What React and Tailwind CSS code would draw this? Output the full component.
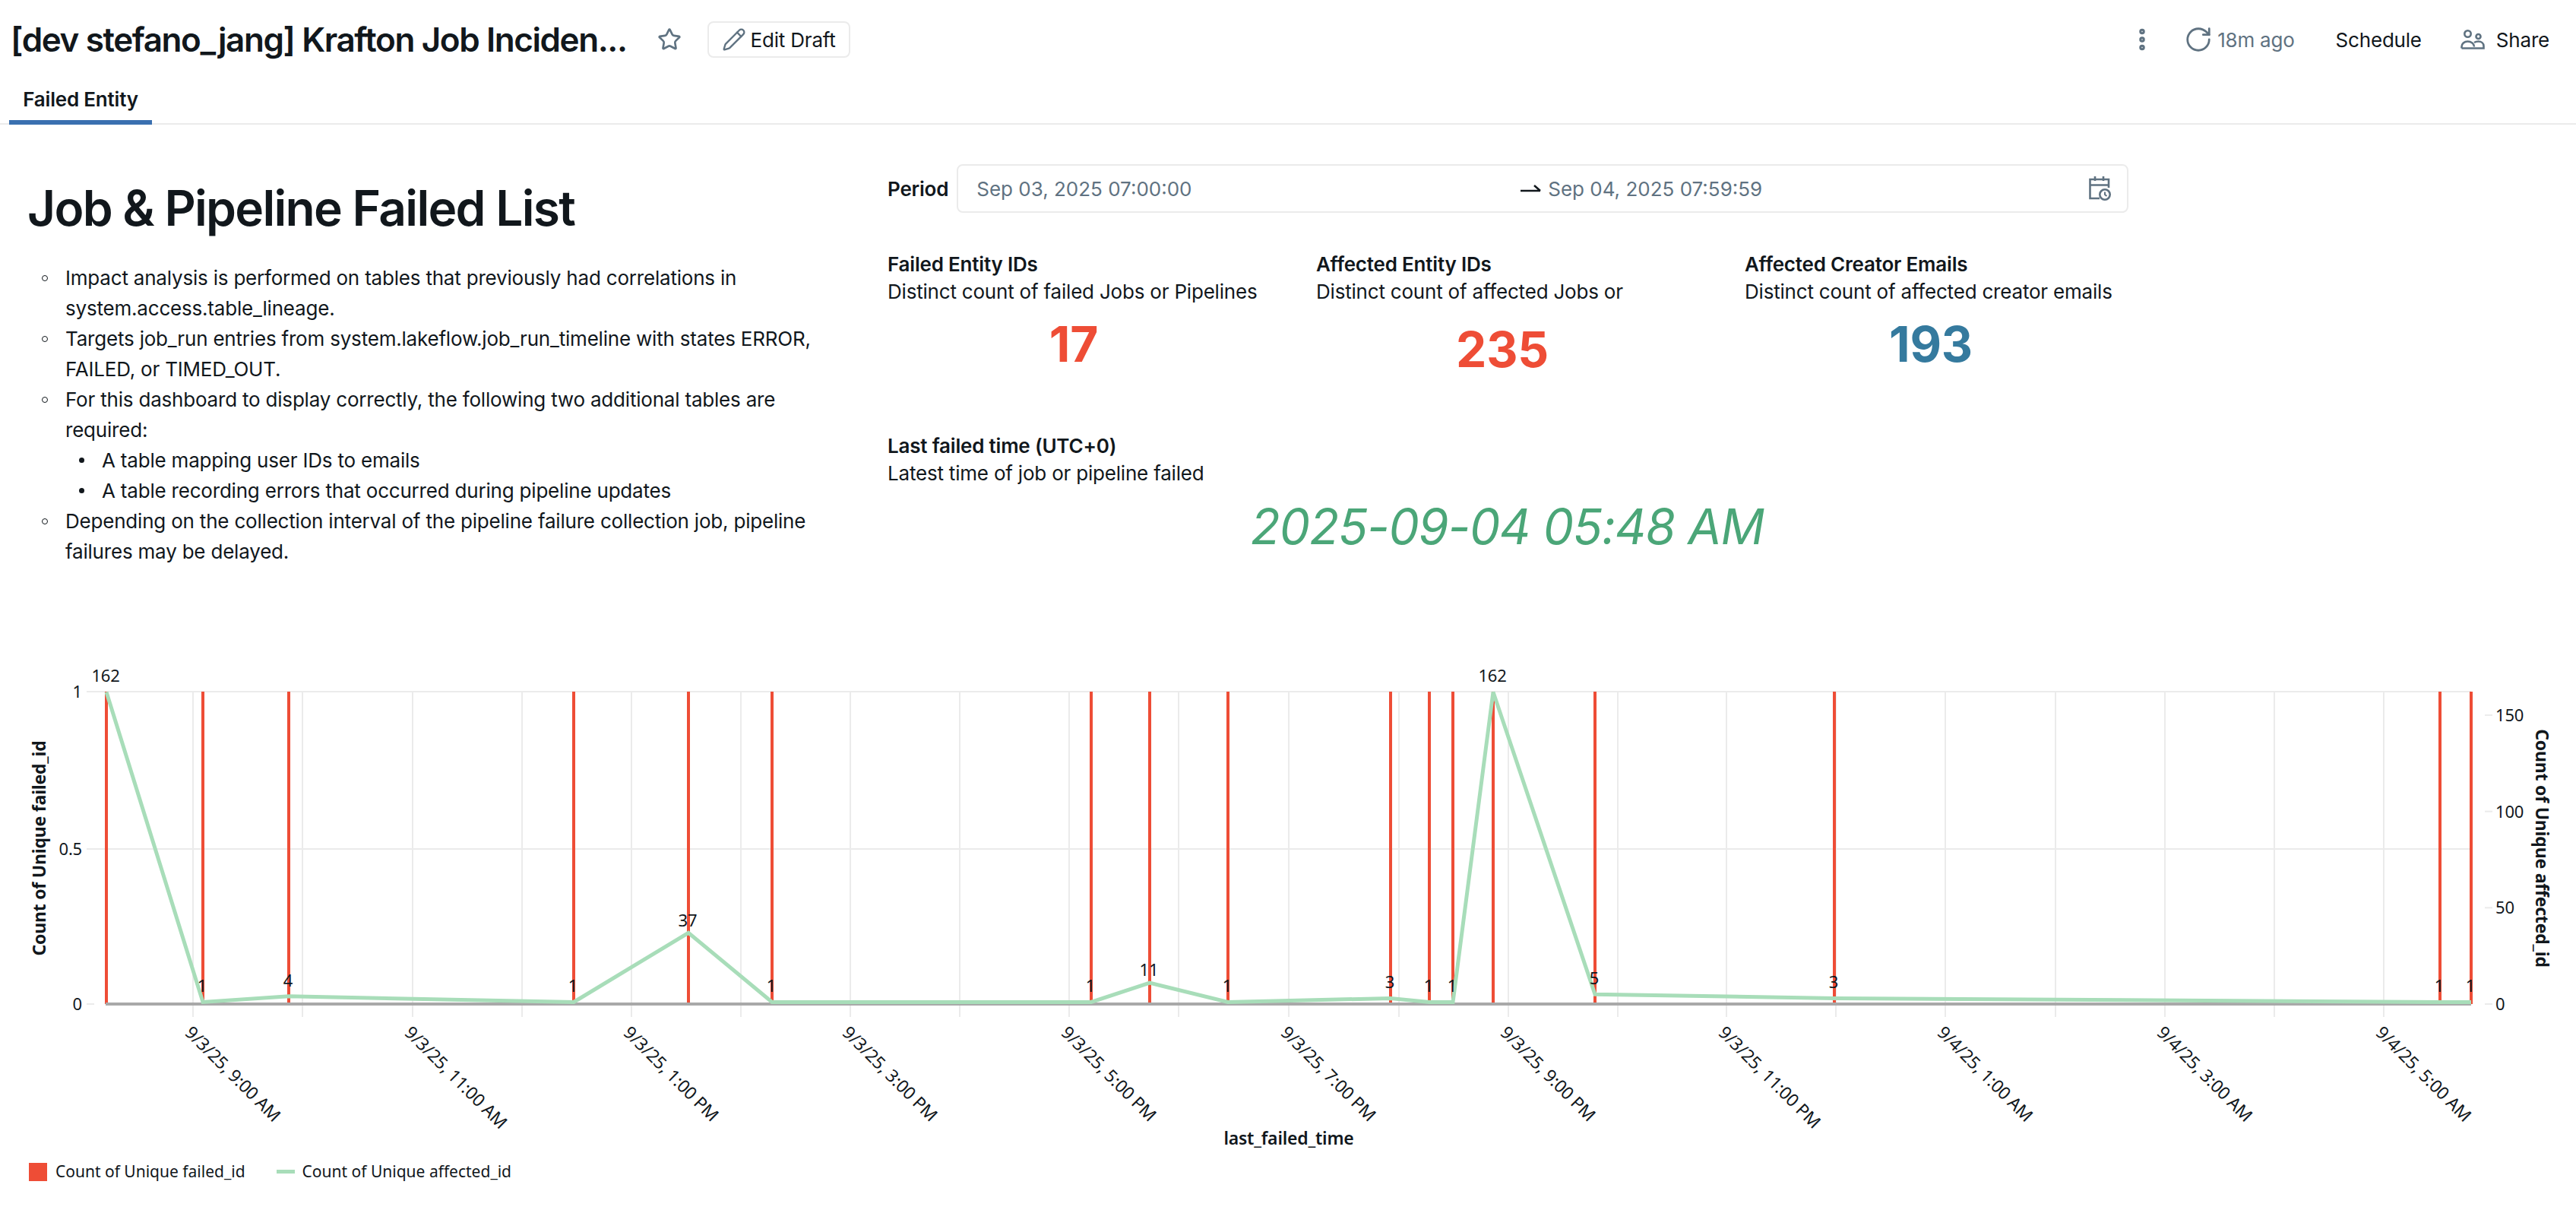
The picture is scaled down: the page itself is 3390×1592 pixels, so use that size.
import React from 'react';
import { Star, Pencil, EllipsisVertical, RotateCw } from 'lucide-react';

const RED = '#ee4d36';
const GREEN = '#a8ddb9';

// x position of each failure bucket, count of affected ids, label gap above the point
const points = [
  [140, 162, 13], [267, 1, 13], [380, 4, 13], [755, 1, 13], [906, 37, 8], [1016, 1, 13], [1436, 1, 13], [1513, 11, 9], [1616, 1, 13],
  [1830, 3, 13], [1881, 1, 13], [1912, 1, 13], [1965, 162, 13], [2099, 5, 13], [2414, 3, 13], [3211, 1, 13], [3252, 1, 13],
];

const gridX = [254, 398, 543, 687, 831, 975, 1119, 1263, 1407, 1551, 1696, 1841, 1985, 2129, 2272, 2416, 2560, 2705, 2849, 2993, 3137];

const xLabels = [
  [254, '9/3/25, 9:00 AM'], [543, '9/3/25, 11:00 AM'], [831, '9/3/25, 1:00 PM'], [1119, '9/3/25, 3:00 PM'],
  [1407, '9/3/25, 5:00 PM'], [1696, '9/3/25, 7:00 PM'], [1985, '9/3/25, 9:00 PM'], [2272, '9/3/25, 11:00 PM'],
  [2560, '9/4/25, 1:00 AM'], [2849, '9/4/25, 3:00 AM'], [3137, '9/4/25, 5:00 AM'],
];

const BASE = 1321;
const TOP = 910;
// svg starts at page y 870, so y values below are page coordinates minus the offset
const OFF = 870;
const yFor = (v) => BASE - v * 2.534 - OFF;

const Chart = () => (
  <svg width="3390" height="650" viewBox="0 0 3390 650" className="block" fontFamily="'Noto Sans', sans-serif">
    {gridX.map((x) => (
      <line key={x} x1={x} x2={x} y1={TOP - OFF} y2={1338 - OFF} stroke="#ebebeb" strokeWidth="2" />
    ))}
    <line x1="114" x2="3252" y1={TOP - OFF} y2={TOP - OFF} stroke="#ebebeb" strokeWidth="2" />
    <line x1="114" x2="3252" y1={1117 - OFF} y2={1117 - OFF} stroke="#ebebeb" strokeWidth="2" />
    <line x1="114" x2="124" y1={BASE - OFF} y2={BASE - OFF} stroke="#ebebeb" strokeWidth="2" />
    {[0, 50, 100, 150].map((v) => (
      <g key={v}>
        <line x1="3270" x2="3280" y1={yFor(v)} y2={yFor(v)} stroke="#ebebeb" strokeWidth="2" />
        <text x="3284" y={yFor(v) + 8} fontSize="22" fill="#11171c">{v}</text>
      </g>
    ))}
    {[[1, TOP], [0.5, 1117], [0, BASE]].map(([v, y]) => (
      <text key={v} x="108" y={y - OFF + 8} textAnchor="end" fontSize="22" fill="#11171c">{v}</text>
    ))}
    {points.map(([x]) => (
      <rect key={x} x={x - 2} y={TOP - OFF} width="4" height={BASE - TOP} fill={RED} />
    ))}
    <line x1="139" x2="3252" y1={BASE - OFF} y2={BASE - OFF} stroke="#a9a9a9" strokeWidth="4" />
    <polyline
      points={points.map(([x, v]) => `${x},${yFor(v)}`).join(' ')}
      fill="none"
      stroke={GREEN}
      strokeWidth="5"
    />
    {points.map(([x, v, gap]) => (
      <text key={x} x={x - 1} y={yFor(v) - gap} textAnchor="middle" fontSize="22" fill="#11171c">{v}</text>
    ))}
    {xLabels.map(([x, t]) => (
      <text key={x} x={x - 12} y={1360 - OFF} fontSize="23" fill="#11171c" transform={`rotate(45 ${x - 12} ${1360 - OFF})`}>{t}</text>
    ))}
    <text x="1696" y={1506 - OFF} textAnchor="middle" fontSize="23" fontWeight="600" fill="#11171c">last_failed_time</text>
    <text transform={`translate(60 ${1116 - OFF}) rotate(-90)`} textAnchor="middle" fontSize="23" fontWeight="700" fill="#11171c">Count of Unique failed_id</text>
    <text transform={`translate(3337 ${1116 - OFF}) rotate(90)`} textAnchor="middle" fontSize="23" fontWeight="700" fill="#11171c">Count of Unique affected_id</text>
  </svg>
);

const Counter = ({ title, sub, value, color, offset }) => (
  <div className="w-[490px]">
    <div className="text-[26px] leading-[36px] font-semibold">{title}</div>
    <div className="text-[26px] leading-[36px] whitespace-nowrap">{sub}</div>
    <div className={`text-center text-[64px] leading-[80px] font-bold ${offset}`} style={{ color }}>{value}</div>
  </div>
);

// outer list row with a hollow marker
const Item = ({ children }) => (
  <li className="flex">
    <span className="w-[50px] shrink-0 pl-[19px] pt-[16px]">
      <span className="block w-[8px] h-[8px] rounded-full border-[1.5px] border-[#11171c]" />
    </span>
    <div>{children}</div>
  </li>
);

// nested list row with a solid marker
const SubItem = ({ children }) => (
  <li className="flex">
    <span className="w-[48px] shrink-0 pl-[18px] pt-[16px]">
      <span className="block w-[7px] h-[7px] rounded-full bg-[#11171c]" />
    </span>
    <div>{children}</div>
  </li>
);

const App = () => {
  return (
    <div className="w-[3390px] h-[1592px] overflow-hidden bg-white text-[#11171c] tracking-[-0.2px] font-['Inter',sans-serif]">
      {/* title bar */}
      <div className="h-[104px] flex items-center pl-[14px] pr-[35px]">
        <h2 className="text-[44px] font-semibold tracking-[-1.4px] whitespace-nowrap">[dev stefano_jang] Krafton Job Inciden...</h2>
        <Star className="ml-[40px] w-[32px] h-[32px] text-[#5f7281]" strokeWidth={2} />
        <button className="ml-[34px] h-[48px] w-[188px] border-2 border-[#ebebeb] rounded-lg flex items-center justify-center gap-[6px] text-[26px]">
          <Pencil className="w-[32px] h-[32px] text-[#5f7281]" strokeWidth={1.75} />
          Edit Draft
        </button>
        <div className="ml-auto flex items-center text-[26px]">
          <EllipsisVertical className="w-[36px] h-[36px] text-[#5f7281]" strokeWidth={3} />
          <RotateCw className="ml-[37px] w-[38px] h-[38px] text-[#5f7281]" strokeWidth={1.75} />
          <span className="ml-[6px] text-[#5f7281]">18m ago</span>
          <span className="ml-[54px]">Schedule</span>
          <svg className="ml-[51px]" width="32" height="26" viewBox="0 0 32 26" fill="none" stroke="#5f7281" strokeWidth="2.6">
            <circle cx="9.5" cy="5.5" r="4.2" />
            <circle cx="23.5" cy="9" r="3" />
            <path d="M1.5 24.5v-2c0-4 3.5-7 8-7s8.5 3 8.5 7" />
            <path d="M18 17c1.5-1 3.5-1.5 5.5-1.5 4 0 7 2.5 7 6v3H1.5" />
          </svg>
          <span className="ml-[15px]">Share</span>
        </div>
      </div>
      {/* tabs */}
      <div className="h-[60px] border-b-2 border-[#ebebeb] pl-[12px]">
        <div className="w-[188px] h-[60px] border-b-[6px] border-[#3a70b0] flex items-center justify-center pb-[2px] text-[26px] font-semibold">Failed Entity</div>
      </div>
      <div className="flex h-[706px] pt-[52px]">
        {/* text widget */}
        <div className="w-[1168px] pl-[36px] shrink-0">
          <h1 className="text-[64px] leading-[80px] mt-[18px] font-semibold tracking-[-1.7px]">Job &amp; Pipeline Failed List</h1>
          <ul className="mt-[32px] text-[26px] leading-[40px] w-[1050px]">
            <Item>Impact analysis is performed on tables that previously had correlations in system.access.table_lineage.</Item>
            <Item>Targets job_run entries from system.lakeflow.job_run_timeline with states ERROR, FAILED, or TIMED_OUT.</Item>
            <Item>
              For this dashboard to display correctly, the following two additional tables are required:
              <ul>
                <SubItem>A table mapping user IDs to emails</SubItem>
                <SubItem>A table recording errors that occurred during pipeline updates</SubItem>
              </ul>
            </Item>
            <Item>Depending on the collection interval of the pipeline failure collection job, pipeline failures may be delayed.</Item>
          </ul>
        </div>
        <div className="w-[1640px]">
          {/* period filter */}
          <div className="flex items-center gap-[11px]">
            <span className="text-[26px] font-semibold">Period</span>
            <div className="w-[1542px] h-[64px] border-2 border-[#ebebeb] rounded-lg flex items-center pl-[24px] pr-[20px] text-[26px] tracking-normal text-[#5f7281]">
              <span className="w-[716px]">Sep 03, 2025 07:00:00</span>
              <svg width="36" height="16" viewBox="0 0 36 16" fill="none" stroke="#11171c" strokeWidth="2.5" className="shrink-0">
                <path d="M0 11h26M26 11l-8-7" />
              </svg>
              <span>Sep 04, 2025 07:59:59</span>
              <svg className="ml-auto" width="30" height="32" viewBox="0 0 30 32" fill="none" stroke="#5f7281" strokeWidth="2.6">
                <path d="M14 29H1.5V4H26v11M1.5 11.5H26M8 0v6M19 0v6" />
                <circle cx="21" cy="24" r="6.7" />
                <path d="M21 20.5V24l2.5 2" strokeWidth="2" />
              </svg>
            </div>
          </div>
          {/* counters */}
          <div className="mt-[50px] flex gap-[74px]">
            <Counter title="Failed Entity IDs" sub="Distinct count of failed Jobs or Pipelines" value="17" color="#ee4d36" offset="mt-[11px]" />
            <Counter title="Affected Entity IDs" sub="Distinct count of affected Jobs or" value="235" color="#ee4d36" offset="mt-[18px]" />
            <Counter title="Affected Creator Emails" sub="Distinct count of affected creator emails" value="193" color="#357a9e" offset="mt-[11px]" />
          </div>
          {/* last failed time */}
          <div className="mt-[69px]">
            <div className="text-[26px] leading-[36px] font-semibold">Last failed time (UTC+0)</div>
            <div className="text-[26px] leading-[36px]">Latest time of job or pipeline failed</div>
            <div className="mt-[10px] pr-[9px] text-center text-[64px] leading-[84px] italic tracking-[-1px] text-[#4ba678]">2025-09-04 05:48 AM</div>
          </div>
        </div>
      </div>
      {/* chart */}
      <Chart />
      <div className="pl-[38px] pt-[6px] flex items-center text-[21px] tracking-normal font-['Noto_Sans',sans-serif]">
        <span className="w-[24px] h-[24px] bg-[#ee4d36]" />
        <span className="ml-[11px]">Count of Unique failed_id</span>
        <span className="ml-[41px] w-[24px] h-[5px] bg-[#a8ddb9]" />
        <span className="ml-[10px]">Count of Unique affected_id</span>
      </div>
    </div>
  );
};

export default App;
